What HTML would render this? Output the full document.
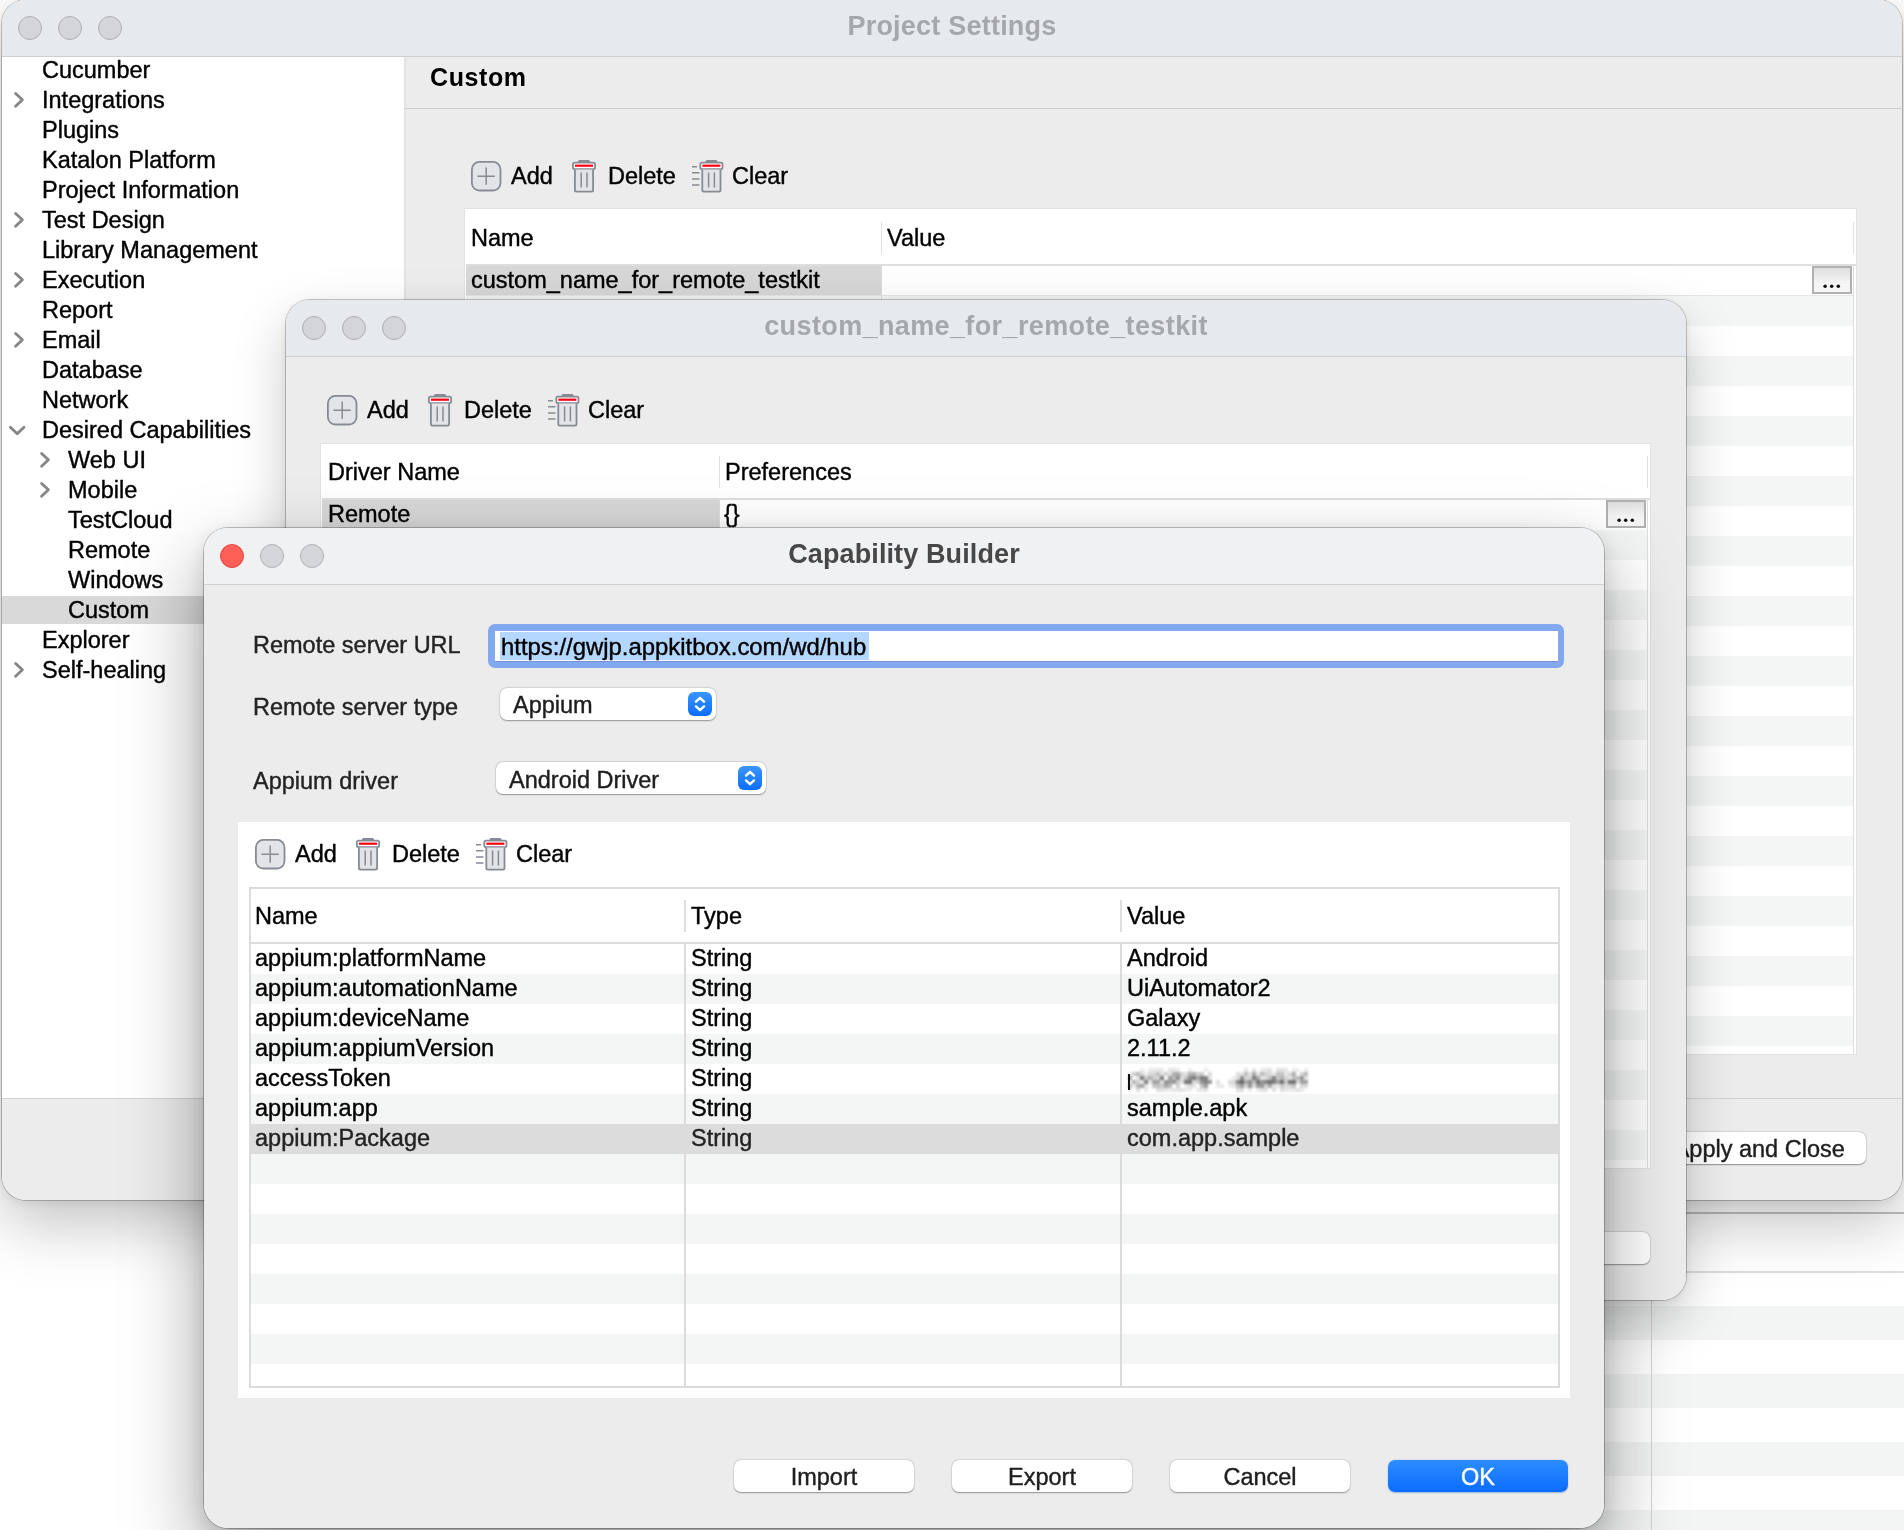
<!DOCTYPE html><html><head><meta charset="utf-8"><style>
html,body{margin:0;padding:0;width:1904px;height:1530px;overflow:hidden;background:#fff}
body{position:relative;font-family:"Liberation Sans",sans-serif}
.a{position:absolute}
.t{position:absolute;white-space:nowrap;will-change:transform;-webkit-text-stroke:0.4px currentColor}
.tb{-webkit-text-stroke:0}
.win{position:absolute;overflow:hidden;border-radius:24px;background:#ececec}
</style></head><body>
<div class="a" style="left:1560px;top:1211.5px;width:344px;height:2px;background:#c2c2c2"></div>
<div class="a" style="left:1560px;top:1271px;width:344px;height:1.5px;background:#dedede"></div>
<div class="a" style="left:1560px;top:1306px;width:344px;height:34px;background:#f3f4f4"></div>
<div class="a" style="left:1560px;top:1374px;width:344px;height:34px;background:#f3f4f4"></div>
<div class="a" style="left:1560px;top:1442px;width:344px;height:34px;background:#f3f4f4"></div>
<div class="a" style="left:1560px;top:1510px;width:344px;height:20px;background:#f3f4f4"></div>
<div class="a" style="left:1650.5px;top:1272px;width:1.2px;height:258px;background:#d4d4d4"></div>
<div class="a" style="left:2px;top:0px;width:1900px;height:1200px;border-radius:24px;box-shadow:0 0 0 1px rgba(0,0,0,0.22),0 3px 10px rgba(0,0,0,0.06),0 22px 64px rgba(0,0,0,0.25)"></div>
<div class="a" style="left:2px;top:0;width:1900px;height:1200px;border-radius:24px;overflow:hidden;background:#ececec">
<div class="a" style="left:-2px;top:0;width:1904px;height:1200px">
<div class="a" style="left:0px;top:0px;width:1904px;height:56px;background:#e7eaec"></div>
<div class="a" style="left:0px;top:56px;width:1904px;height:1px;background:#cdcfd1"></div>
<div class="a" style="left:18px;top:16px;width:22px;height:22px;border-radius:50%;background:#d3d5d8;border:1px solid #adb0b3;"></div>
<div class="a" style="left:58px;top:16px;width:22px;height:22px;border-radius:50%;background:#d3d5d8;border:1px solid #adb0b3;"></div>
<div class="a" style="left:98px;top:16px;width:22px;height:22px;border-radius:50%;background:#d3d5d8;border:1px solid #adb0b3;"></div>
<div class="t tb" style="left:452.0px;width:1000px;text-align:center;top:13.34px;font-size:27px;line-height:27px;color:#a5a8ab;font-weight:bold;letter-spacing:0.22px">Project Settings</div>
<div class="a" style="left:2px;top:57px;width:402px;height:1041px;background:#fff"></div>
<div class="a" style="left:404px;top:57px;width:1.5px;height:1041px;background:#e3e3e3"></div>
<div class="a" style="left:0px;top:1098px;width:1904px;height:1px;background:#d2d2d2"></div>
<div class="t" style="left:42px;top:59.41px;font-size:23.5px;line-height:23.5px;color:#000;font-weight:normal;letter-spacing:0px;">Cucumber</div>
<svg class="a" style="left:13px;top:91px" width="14" height="18" viewBox="0 0 14 18"><path d="M2.6 2.4L9.4 8.8L2.6 15.2" fill="none" stroke="#858585" stroke-width="2.8" stroke-linecap="round" stroke-linejoin="round"/></svg>
<div class="t" style="left:42px;top:89.41px;font-size:23.5px;line-height:23.5px;color:#000;font-weight:normal;letter-spacing:0px;">Integrations</div>
<div class="t" style="left:42px;top:119.41px;font-size:23.5px;line-height:23.5px;color:#000;font-weight:normal;letter-spacing:0px;">Plugins</div>
<div class="t" style="left:42px;top:149.41px;font-size:23.5px;line-height:23.5px;color:#000;font-weight:normal;letter-spacing:0px;">Katalon Platform</div>
<div class="t" style="left:42px;top:179.41px;font-size:23.5px;line-height:23.5px;color:#000;font-weight:normal;letter-spacing:0px;">Project Information</div>
<svg class="a" style="left:13px;top:211px" width="14" height="18" viewBox="0 0 14 18"><path d="M2.6 2.4L9.4 8.8L2.6 15.2" fill="none" stroke="#858585" stroke-width="2.8" stroke-linecap="round" stroke-linejoin="round"/></svg>
<div class="t" style="left:42px;top:209.41px;font-size:23.5px;line-height:23.5px;color:#000;font-weight:normal;letter-spacing:0px;">Test Design</div>
<div class="t" style="left:42px;top:239.41px;font-size:23.5px;line-height:23.5px;color:#000;font-weight:normal;letter-spacing:0px;">Library Management</div>
<svg class="a" style="left:13px;top:271px" width="14" height="18" viewBox="0 0 14 18"><path d="M2.6 2.4L9.4 8.8L2.6 15.2" fill="none" stroke="#858585" stroke-width="2.8" stroke-linecap="round" stroke-linejoin="round"/></svg>
<div class="t" style="left:42px;top:269.41px;font-size:23.5px;line-height:23.5px;color:#000;font-weight:normal;letter-spacing:0px;">Execution</div>
<div class="t" style="left:42px;top:299.41px;font-size:23.5px;line-height:23.5px;color:#000;font-weight:normal;letter-spacing:0px;">Report</div>
<svg class="a" style="left:13px;top:331px" width="14" height="18" viewBox="0 0 14 18"><path d="M2.6 2.4L9.4 8.8L2.6 15.2" fill="none" stroke="#858585" stroke-width="2.8" stroke-linecap="round" stroke-linejoin="round"/></svg>
<div class="t" style="left:42px;top:329.41px;font-size:23.5px;line-height:23.5px;color:#000;font-weight:normal;letter-spacing:0px;">Email</div>
<div class="t" style="left:42px;top:359.41px;font-size:23.5px;line-height:23.5px;color:#000;font-weight:normal;letter-spacing:0px;">Database</div>
<div class="t" style="left:42px;top:389.41px;font-size:23.5px;line-height:23.5px;color:#000;font-weight:normal;letter-spacing:0px;">Network</div>
<svg class="a" style="left:8px;top:424.8px" width="18" height="14" viewBox="0 0 18 14"><path d="M2.4 2.2L9.2 8.8L16 2.2" fill="none" stroke="#858585" stroke-width="2.8" stroke-linecap="round" stroke-linejoin="round"/></svg>
<div class="t" style="left:42px;top:419.41px;font-size:23.5px;line-height:23.5px;color:#000;font-weight:normal;letter-spacing:0px;">Desired Capabilities</div>
<svg class="a" style="left:39px;top:451px" width="14" height="18" viewBox="0 0 14 18"><path d="M2.6 2.4L9.4 8.8L2.6 15.2" fill="none" stroke="#858585" stroke-width="2.8" stroke-linecap="round" stroke-linejoin="round"/></svg>
<div class="t" style="left:68px;top:449.41px;font-size:23.5px;line-height:23.5px;color:#000;font-weight:normal;letter-spacing:0px;">Web UI</div>
<svg class="a" style="left:39px;top:481px" width="14" height="18" viewBox="0 0 14 18"><path d="M2.6 2.4L9.4 8.8L2.6 15.2" fill="none" stroke="#858585" stroke-width="2.8" stroke-linecap="round" stroke-linejoin="round"/></svg>
<div class="t" style="left:68px;top:479.41px;font-size:23.5px;line-height:23.5px;color:#000;font-weight:normal;letter-spacing:0px;">Mobile</div>
<div class="t" style="left:68px;top:509.41px;font-size:23.5px;line-height:23.5px;color:#000;font-weight:normal;letter-spacing:0px;">TestCloud</div>
<div class="t" style="left:68px;top:539.41px;font-size:23.5px;line-height:23.5px;color:#000;font-weight:normal;letter-spacing:0px;">Remote</div>
<div class="t" style="left:68px;top:569.41px;font-size:23.5px;line-height:23.5px;color:#000;font-weight:normal;letter-spacing:0px;">Windows</div>
<div class="a" style="left:2px;top:596px;width:402px;height:28px;background:#d9d9d9"></div>
<div class="t" style="left:68px;top:599.41px;font-size:23.5px;line-height:23.5px;color:#000;font-weight:normal;letter-spacing:0px;">Custom</div>
<div class="t" style="left:42px;top:629.41px;font-size:23.5px;line-height:23.5px;color:#000;font-weight:normal;letter-spacing:0px;">Explorer</div>
<svg class="a" style="left:13px;top:661px" width="14" height="18" viewBox="0 0 14 18"><path d="M2.6 2.4L9.4 8.8L2.6 15.2" fill="none" stroke="#858585" stroke-width="2.8" stroke-linecap="round" stroke-linejoin="round"/></svg>
<div class="t" style="left:42px;top:659.41px;font-size:23.5px;line-height:23.5px;color:#000;font-weight:normal;letter-spacing:0px;">Self-healing</div>
<div class="t tb" style="left:429.5px;top:65.34px;font-size:25px;line-height:25px;color:#000;font-weight:bold;letter-spacing:0.6px;">Custom</div>
<div class="a" style="left:404px;top:108px;width:1500px;height:1.2px;background:#cfcfcf"></div>
<svg class="a" style="left:471px;top:161px" width="32" height="32" viewBox="0 0 32 32"><rect x="0.9" y="0.9" width="28.6" height="28.6" rx="7.5" fill="#e3e4e7" stroke="#868b93" stroke-width="1.8"/><path d="M6.5 15.2H23.8M15.2 6.5V23.8" stroke="#868b93" stroke-width="1.5"/></svg>
<div class="t" style="left:511px;top:165.41px;font-size:23.5px;line-height:23.5px;color:#000;font-weight:normal;letter-spacing:0px;">Add</div>
<svg class="a" style="left:572px;top:160px" width="26" height="34" viewBox="0 0 26 34"><rect x="6" y="0" width="12" height="4" rx="1.5" fill="#868b93"/><rect x="0.9" y="2.6" width="22.2" height="6.6" rx="1.6" fill="#fff" stroke="#868b93" stroke-width="1.8"/><rect x="3" y="4.6" width="18" height="2.2" fill="#ff0010"/><path d="M2.9 9.4V30Q2.9 31.6 4.5 31.6H19.5Q21.1 31.6 21.1 30V9.4" fill="#e3e4e7" stroke="#868b93" stroke-width="1.8"/><path d="M9.2 12.4V27.6M15 12.4V27.6" stroke="#868b93" stroke-width="1.5"/></svg>
<div class="t" style="left:608px;top:165.41px;font-size:23.5px;line-height:23.5px;color:#000;font-weight:normal;letter-spacing:0px;">Delete</div>
<svg class="a" style="left:691px;top:160px" width="34" height="34" viewBox="0 0 34 34"><path d="M1 6.8H6M1 12.8H8.5M1 19H8.5M1 25H8.5" stroke="#868b93" stroke-width="1.4"/><rect x="14.5" y="0" width="12" height="4" rx="1.5" fill="#868b93"/><rect x="9.3" y="2.6" width="22.2" height="6.6" rx="1.6" fill="#fff" stroke="#868b93" stroke-width="1.8"/><rect x="11.4" y="4.6" width="18" height="2.2" fill="#ff0010"/><path d="M11.3 9.4V30Q11.3 31.6 12.9 31.6H27.9Q29.5 31.6 29.5 30V9.4" fill="#e3e4e7" stroke="#868b93" stroke-width="1.8"/><path d="M17.6 12.4V27.6M23.4 12.4V27.6" stroke="#868b93" stroke-width="1.5"/></svg>
<div class="t" style="left:732px;top:165.41px;font-size:23.5px;line-height:23.5px;color:#000;font-weight:normal;letter-spacing:0px;">Clear</div>
<div class="a" style="left:465px;top:209px;width:1391px;height:845px;background:#fff;box-shadow:0 0 0 1px #e2e2e2"></div>
<div class="a" style="left:466px;top:264px;width:1390px;height:2px;background:#dedede"></div>
<div class="a" style="left:466px;top:296px;width:1387px;height:30px;background:#f4f5f5"></div>
<div class="a" style="left:466px;top:356px;width:1387px;height:30px;background:#f4f5f5"></div>
<div class="a" style="left:466px;top:416px;width:1387px;height:30px;background:#f4f5f5"></div>
<div class="a" style="left:466px;top:476px;width:1387px;height:30px;background:#f4f5f5"></div>
<div class="a" style="left:466px;top:536px;width:1387px;height:30px;background:#f4f5f5"></div>
<div class="a" style="left:466px;top:596px;width:1387px;height:30px;background:#f4f5f5"></div>
<div class="a" style="left:466px;top:656px;width:1387px;height:30px;background:#f4f5f5"></div>
<div class="a" style="left:466px;top:716px;width:1387px;height:30px;background:#f4f5f5"></div>
<div class="a" style="left:466px;top:776px;width:1387px;height:30px;background:#f4f5f5"></div>
<div class="a" style="left:466px;top:836px;width:1387px;height:30px;background:#f4f5f5"></div>
<div class="a" style="left:466px;top:896px;width:1387px;height:30px;background:#f4f5f5"></div>
<div class="a" style="left:466px;top:956px;width:1387px;height:30px;background:#f4f5f5"></div>
<div class="a" style="left:466px;top:1016px;width:1387px;height:30px;background:#f4f5f5"></div>
<div class="a" style="left:466px;top:266px;width:415px;height:29.5px;background:#d7d7d7"></div>
<div class="a" style="left:880.5px;top:222px;width:1.5px;height:32px;background:#e0e0e0"></div>
<div class="a" style="left:880.5px;top:266px;width:1.5px;height:788px;background:#dcdcdc"></div>
<div class="a" style="left:1852.5px;top:222px;width:1.5px;height:32px;background:#e0e0e0"></div>
<div class="a" style="left:1852.5px;top:266px;width:1.8px;height:788px;background:#dedede"></div>
<div class="a" style="left:466px;top:295px;width:1387px;height:1px;background:#e6e6e6"></div>
<div class="t" style="left:471px;top:227.21px;font-size:23.5px;line-height:23.5px;color:#000;font-weight:normal;letter-spacing:0px;">Name</div>
<div class="t" style="left:886.5px;top:227.21px;font-size:23.5px;line-height:23.5px;color:#000;font-weight:normal;letter-spacing:0px;">Value</div>
<div class="t" style="left:471px;top:269.41px;font-size:23.5px;line-height:23.5px;color:#000;font-weight:normal;letter-spacing:0px;">custom_name_for_remote_testkit</div>
<div class="a" style="left:1812px;top:266px;width:36px;height:24px;border:2px solid #b1b1b1;background:linear-gradient(#dedede,#f4f4f4 60%,#f6f6f6)"></div>
<svg class="a" style="left:1812px;top:266px" width="40" height="28" viewBox="1812 266 40 28"><circle cx="1825.10" cy="286.20" r="1.75" fill="#111"/><circle cx="1831.70" cy="286.20" r="1.75" fill="#111"/><circle cx="1838.30" cy="286.20" r="1.75" fill="#111"/></svg>
<div class="a" style="left:1651.5px;top:1132px;width:214.5px;height:32px;border-radius:7px;background:#fff;box-shadow:0 0.5px 1.5px rgba(0,0,0,0.38),0 0 0 0.5px rgba(0,0,0,0.06)"></div>
<div class="t" style="left:1651.5px;width:214.5px;text-align:center;top:1137.61px;font-size:23.5px;line-height:23.5px;color:#1e1e1e;font-weight:normal;letter-spacing:0px">Apply and Close</div>
</div></div>
<div class="a" style="left:286px;top:300px;width:1400px;height:1000px;border-radius:24px;box-shadow:0 0 0 1px rgba(0,0,0,0.22),0 2px 10px rgba(0,0,0,0.08),0 20px 52px rgba(0,0,0,0.21)"></div>
<div class="a" style="left:286px;top:300px;width:1400px;height:1000px;border-radius:24px;overflow:hidden;background:#ececec">
<div class="a" style="left:-286px;top:-300px;width:1904px;height:1530px">
<div class="a" style="left:286px;top:300px;width:1400px;height:56px;background:#e7eaec"></div>
<div class="a" style="left:286px;top:356px;width:1400px;height:1px;background:#cdcfd1"></div>
<div class="a" style="left:302px;top:316px;width:22px;height:22px;border-radius:50%;background:#d3d5d8;border:1px solid #adb0b3;"></div>
<div class="a" style="left:342px;top:316px;width:22px;height:22px;border-radius:50%;background:#d3d5d8;border:1px solid #adb0b3;"></div>
<div class="a" style="left:382px;top:316px;width:22px;height:22px;border-radius:50%;background:#d3d5d8;border:1px solid #adb0b3;"></div>
<div class="t tb" style="left:485.5px;width:1000px;text-align:center;top:313.44px;font-size:27px;line-height:27px;color:#a5a8ab;font-weight:bold;letter-spacing:0.38px">custom_name_for_remote_testkit</div>
<svg class="a" style="left:327px;top:395px" width="32" height="32" viewBox="0 0 32 32"><rect x="0.9" y="0.9" width="28.6" height="28.6" rx="7.5" fill="#e3e4e7" stroke="#868b93" stroke-width="1.8"/><path d="M6.5 15.2H23.8M15.2 6.5V23.8" stroke="#868b93" stroke-width="1.5"/></svg>
<div class="t" style="left:367px;top:399.41px;font-size:23.5px;line-height:23.5px;color:#000;font-weight:normal;letter-spacing:0px;">Add</div>
<svg class="a" style="left:428px;top:394px" width="26" height="34" viewBox="0 0 26 34"><rect x="6" y="0" width="12" height="4" rx="1.5" fill="#868b93"/><rect x="0.9" y="2.6" width="22.2" height="6.6" rx="1.6" fill="#fff" stroke="#868b93" stroke-width="1.8"/><rect x="3" y="4.6" width="18" height="2.2" fill="#ff0010"/><path d="M2.9 9.4V30Q2.9 31.6 4.5 31.6H19.5Q21.1 31.6 21.1 30V9.4" fill="#e3e4e7" stroke="#868b93" stroke-width="1.8"/><path d="M9.2 12.4V27.6M15 12.4V27.6" stroke="#868b93" stroke-width="1.5"/></svg>
<div class="t" style="left:464px;top:399.41px;font-size:23.5px;line-height:23.5px;color:#000;font-weight:normal;letter-spacing:0px;">Delete</div>
<svg class="a" style="left:547px;top:394px" width="34" height="34" viewBox="0 0 34 34"><path d="M1 6.8H6M1 12.8H8.5M1 19H8.5M1 25H8.5" stroke="#868b93" stroke-width="1.4"/><rect x="14.5" y="0" width="12" height="4" rx="1.5" fill="#868b93"/><rect x="9.3" y="2.6" width="22.2" height="6.6" rx="1.6" fill="#fff" stroke="#868b93" stroke-width="1.8"/><rect x="11.4" y="4.6" width="18" height="2.2" fill="#ff0010"/><path d="M11.3 9.4V30Q11.3 31.6 12.9 31.6H27.9Q29.5 31.6 29.5 30V9.4" fill="#e3e4e7" stroke="#868b93" stroke-width="1.8"/><path d="M17.6 12.4V27.6M23.4 12.4V27.6" stroke="#868b93" stroke-width="1.5"/></svg>
<div class="t" style="left:588px;top:399.41px;font-size:23.5px;line-height:23.5px;color:#000;font-weight:normal;letter-spacing:0px;">Clear</div>
<div class="a" style="left:321px;top:443.5px;width:1329px;height:724.5px;background:#fff;box-shadow:0 0 0 1px #e2e2e2"></div>
<div class="a" style="left:322px;top:498px;width:1328px;height:2px;background:#dedede"></div>
<div class="a" style="left:322px;top:530px;width:1325px;height:30px;background:#f4f5f5"></div>
<div class="a" style="left:322px;top:590px;width:1325px;height:30px;background:#f4f5f5"></div>
<div class="a" style="left:322px;top:650px;width:1325px;height:30px;background:#f4f5f5"></div>
<div class="a" style="left:322px;top:710px;width:1325px;height:30px;background:#f4f5f5"></div>
<div class="a" style="left:322px;top:770px;width:1325px;height:30px;background:#f4f5f5"></div>
<div class="a" style="left:322px;top:830px;width:1325px;height:30px;background:#f4f5f5"></div>
<div class="a" style="left:322px;top:890px;width:1325px;height:30px;background:#f4f5f5"></div>
<div class="a" style="left:322px;top:950px;width:1325px;height:30px;background:#f4f5f5"></div>
<div class="a" style="left:322px;top:1010px;width:1325px;height:30px;background:#f4f5f5"></div>
<div class="a" style="left:322px;top:1070px;width:1325px;height:30px;background:#f4f5f5"></div>
<div class="a" style="left:322px;top:1130px;width:1325px;height:30px;background:#f4f5f5"></div>
<div class="a" style="left:322px;top:500px;width:397px;height:28px;background:#d7d7d7"></div>
<div class="a" style="left:718.5px;top:456px;width:1.5px;height:32px;background:#e0e0e0"></div>
<div class="a" style="left:718.5px;top:500px;width:1.5px;height:668px;background:#dcdcdc"></div>
<div class="a" style="left:1646.5px;top:456px;width:1.5px;height:32px;background:#e0e0e0"></div>
<div class="a" style="left:1646.5px;top:500px;width:1.8px;height:668px;background:#dedede"></div>
<div class="t" style="left:327.5px;top:461.01px;font-size:23.5px;line-height:23.5px;color:#000;font-weight:normal;letter-spacing:0px;">Driver Name</div>
<div class="t" style="left:725px;top:461.01px;font-size:23.5px;line-height:23.5px;color:#000;font-weight:normal;letter-spacing:0px;">Preferences</div>
<div class="t" style="left:327.5px;top:503.11px;font-size:23.5px;line-height:23.5px;color:#000;font-weight:normal;letter-spacing:0px;">Remote</div>
<div class="t" style="left:724px;top:503.11px;font-size:23.5px;line-height:23.5px;color:#000;font-weight:normal;letter-spacing:0px;">{}</div>
<div class="a" style="left:1606px;top:500px;width:36px;height:24px;border:2px solid #b1b1b1;background:linear-gradient(#dedede,#f4f4f4 60%,#f6f6f6)"></div>
<svg class="a" style="left:1606px;top:500px" width="40" height="28" viewBox="1606 500 40 28"><circle cx="1619.10" cy="520.20" r="1.75" fill="#111"/><circle cx="1625.70" cy="520.20" r="1.75" fill="#111"/><circle cx="1632.30" cy="520.20" r="1.75" fill="#111"/></svg>
<div class="a" style="left:1470px;top:1232px;width:180px;height:32px;border-radius:7px;background:#fff;box-shadow:0 0.5px 1.5px rgba(0,0,0,0.38),0 0 0 0.5px rgba(0,0,0,0.06)"></div>
<div class="t" style="left:1470.0px;width:180px;text-align:center;top:1237.61px;font-size:23.5px;line-height:23.5px;color:#1e1e1e;font-weight:normal;letter-spacing:0px">OK</div>
</div></div>
<div class="a" style="left:204px;top:528px;width:1400px;height:1000px;border-radius:24px;box-shadow:0 0 0 1px rgba(0,0,0,0.24),0 6px 22px rgba(0,0,0,0.12),0 36px 80px rgba(0,0,0,0.38)"></div>
<div class="a" style="left:204px;top:528px;width:1400px;height:1000px;border-radius:24px;overflow:hidden;background:#ececec">
<div class="a" style="left:-204px;top:-528px;width:1904px;height:1530px">
<div class="a" style="left:204px;top:528px;width:1400px;height:56px;background:#f0f1f3"></div>
<div class="a" style="left:204px;top:584px;width:1400px;height:1px;background:#cfd0d2"></div>
<div class="a" style="left:220px;top:544px;width:22px;height:22px;border-radius:50%;background:#fe5f57;border:1px solid #e2463f;"></div>
<div class="a" style="left:260px;top:544px;width:22px;height:22px;border-radius:50%;background:#d3d5d8;border:1px solid #adb0b3;"></div>
<div class="a" style="left:300px;top:544px;width:22px;height:22px;border-radius:50%;background:#d3d5d8;border:1px solid #adb0b3;"></div>
<div class="t tb" style="left:403.5px;width:1000px;text-align:center;top:540.84px;font-size:27px;line-height:27px;color:#474747;font-weight:bold;letter-spacing:0.12px">Capability Builder</div>
<div class="t" style="left:252.5px;top:633.81px;font-size:23.5px;line-height:23.5px;color:#232323;font-weight:normal;letter-spacing:0px;">Remote server URL</div>
<div class="t" style="left:252.5px;top:696.41px;font-size:23.5px;line-height:23.5px;color:#232323;font-weight:normal;letter-spacing:0px;">Remote server type</div>
<div class="t" style="left:252.5px;top:769.81px;font-size:23.5px;line-height:23.5px;color:#232323;font-weight:normal;letter-spacing:0px;">Appium driver</div>
<div class="a" style="left:488px;top:624px;width:1076px;height:44px;border-radius:7px;background:#82a9ef"></div>
<div class="a" style="left:494.5px;top:630.5px;width:1063px;height:31px;background:#fff;box-shadow:inset 0 -1px 0 #6f93d6"></div>
<div class="a" style="left:500px;top:632px;width:369px;height:28px;background:#b3d7ff"></div>
<div class="t" style="left:501px;top:634.57px;font-size:23.9px;line-height:23.9px;color:#000;font-weight:normal;letter-spacing:0px;">https://gwjp.appkitbox.com/wd/hub</div>
<div class="a" style="left:500px;top:688px;width:216px;height:32px;border-radius:7px;background:#fff;box-shadow:0 0.5px 1.5px rgba(0,0,0,0.35),0 0 0 0.5px rgba(0,0,0,0.08)"></div>
<div class="t" style="left:513px;top:694.41px;font-size:23.5px;line-height:23.5px;color:#1d1d1d;font-weight:normal;letter-spacing:0px;">Appium</div>
<svg class="a" style="left:688px;top:692px" width="24" height="24" viewBox="0 0 24 24"><defs><linearGradient id="sg" x1="0" y1="0" x2="0" y2="1"><stop offset="0" stop-color="#3b95ff"/><stop offset="1" stop-color="#0b6dff"/></linearGradient></defs><rect x="0" y="0" width="24" height="24" rx="6" fill="url(#sg)"/><path d="M8 9.6L12 5.8L16 9.6M8 14.4L12 18.2L16 14.4" fill="none" stroke="#fff" stroke-width="2.4" stroke-linecap="round" stroke-linejoin="round"/></svg>
<div class="a" style="left:496px;top:762px;width:270px;height:32px;border-radius:7px;background:#fff;box-shadow:0 0.5px 1.5px rgba(0,0,0,0.35),0 0 0 0.5px rgba(0,0,0,0.08)"></div>
<div class="t" style="left:509px;top:768.71px;font-size:23.5px;line-height:23.5px;color:#1d1d1d;font-weight:normal;letter-spacing:0px;">Android Driver</div>
<svg class="a" style="left:738px;top:766px" width="24" height="24" viewBox="0 0 24 24"><defs><linearGradient id="sg" x1="0" y1="0" x2="0" y2="1"><stop offset="0" stop-color="#3b95ff"/><stop offset="1" stop-color="#0b6dff"/></linearGradient></defs><rect x="0" y="0" width="24" height="24" rx="6" fill="url(#sg)"/><path d="M8 9.6L12 5.8L16 9.6M8 14.4L12 18.2L16 14.4" fill="none" stroke="#fff" stroke-width="2.4" stroke-linecap="round" stroke-linejoin="round"/></svg>
<div class="a" style="left:238px;top:822px;width:1332px;height:576px;background:#fff"></div>
<svg class="a" style="left:255px;top:839px" width="32" height="32" viewBox="0 0 32 32"><rect x="0.9" y="0.9" width="28.6" height="28.6" rx="7.5" fill="#e3e4e7" stroke="#868b93" stroke-width="1.8"/><path d="M6.5 15.2H23.8M15.2 6.5V23.8" stroke="#868b93" stroke-width="1.5"/></svg>
<div class="t" style="left:295px;top:843.41px;font-size:23.5px;line-height:23.5px;color:#000;font-weight:normal;letter-spacing:0px;">Add</div>
<svg class="a" style="left:356px;top:838px" width="26" height="34" viewBox="0 0 26 34"><rect x="6" y="0" width="12" height="4" rx="1.5" fill="#868b93"/><rect x="0.9" y="2.6" width="22.2" height="6.6" rx="1.6" fill="#fff" stroke="#868b93" stroke-width="1.8"/><rect x="3" y="4.6" width="18" height="2.2" fill="#ff0010"/><path d="M2.9 9.4V30Q2.9 31.6 4.5 31.6H19.5Q21.1 31.6 21.1 30V9.4" fill="#e3e4e7" stroke="#868b93" stroke-width="1.8"/><path d="M9.2 12.4V27.6M15 12.4V27.6" stroke="#868b93" stroke-width="1.5"/></svg>
<div class="t" style="left:392px;top:843.41px;font-size:23.5px;line-height:23.5px;color:#000;font-weight:normal;letter-spacing:0px;">Delete</div>
<svg class="a" style="left:475px;top:838px" width="34" height="34" viewBox="0 0 34 34"><path d="M1 6.8H6M1 12.8H8.5M1 19H8.5M1 25H8.5" stroke="#868b93" stroke-width="1.4"/><rect x="14.5" y="0" width="12" height="4" rx="1.5" fill="#868b93"/><rect x="9.3" y="2.6" width="22.2" height="6.6" rx="1.6" fill="#fff" stroke="#868b93" stroke-width="1.8"/><rect x="11.4" y="4.6" width="18" height="2.2" fill="#ff0010"/><path d="M11.3 9.4V30Q11.3 31.6 12.9 31.6H27.9Q29.5 31.6 29.5 30V9.4" fill="#e3e4e7" stroke="#868b93" stroke-width="1.8"/><path d="M17.6 12.4V27.6M23.4 12.4V27.6" stroke="#868b93" stroke-width="1.5"/></svg>
<div class="t" style="left:516px;top:843.41px;font-size:23.5px;line-height:23.5px;color:#000;font-weight:normal;letter-spacing:0px;">Clear</div>
<div class="a" style="left:248.5px;top:886.5px;width:1311px;height:501.5px;background:#fff;box-shadow:inset 0 0 0 2px #dcdcdc"></div>
<div class="a" style="left:250.5px;top:974px;width:1307px;height:30px;background:#f4f5f5"></div>
<div class="a" style="left:250.5px;top:1034px;width:1307px;height:30px;background:#f4f5f5"></div>
<div class="a" style="left:250.5px;top:1094px;width:1307px;height:30px;background:#f4f5f5"></div>
<div class="a" style="left:250.5px;top:1154px;width:1307px;height:30px;background:#f4f5f5"></div>
<div class="a" style="left:250.5px;top:1214px;width:1307px;height:30px;background:#f4f5f5"></div>
<div class="a" style="left:250.5px;top:1274px;width:1307px;height:30px;background:#f4f5f5"></div>
<div class="a" style="left:250.5px;top:1334px;width:1307px;height:30px;background:#f4f5f5"></div>
<div class="a" style="left:250.5px;top:1124px;width:1307px;height:30px;background:#dcdcdc"></div>
<div class="a" style="left:250.5px;top:941.5px;width:1307px;height:2px;background:#dcdcdc"></div>
<div class="a" style="left:684.2px;top:900px;width:1.6px;height:32px;background:#e0e0e0"></div>
<div class="a" style="left:1120.2px;top:900px;width:1.6px;height:32px;background:#e0e0e0"></div>
<div class="a" style="left:684.2px;top:943.5px;width:1.6px;height:443px;background:#dcdcdc"></div>
<div class="a" style="left:1120.2px;top:943.5px;width:1.6px;height:443px;background:#dcdcdc"></div>
<div class="t" style="left:255px;top:904.91px;font-size:23.5px;line-height:23.5px;color:#000;font-weight:normal;letter-spacing:0px;">Name</div>
<div class="t" style="left:691px;top:904.91px;font-size:23.5px;line-height:23.5px;color:#000;font-weight:normal;letter-spacing:0px;">Type</div>
<div class="t" style="left:1126.5px;top:904.91px;font-size:23.5px;line-height:23.5px;color:#000;font-weight:normal;letter-spacing:0px;">Value</div>
<div class="t" style="left:255px;top:946.91px;font-size:23.5px;line-height:23.5px;color:#000;font-weight:normal;letter-spacing:0px;">appium:platformName</div>
<div class="t" style="left:691px;top:946.91px;font-size:23.5px;line-height:23.5px;color:#000;font-weight:normal;letter-spacing:0px;">String</div>
<div class="t" style="left:1126.5px;top:946.91px;font-size:23.5px;line-height:23.5px;color:#000;font-weight:normal;letter-spacing:0px;">Android</div>
<div class="t" style="left:255px;top:976.91px;font-size:23.5px;line-height:23.5px;color:#000;font-weight:normal;letter-spacing:0px;">appium:automationName</div>
<div class="t" style="left:691px;top:976.91px;font-size:23.5px;line-height:23.5px;color:#000;font-weight:normal;letter-spacing:0px;">String</div>
<div class="t" style="left:1126.5px;top:976.91px;font-size:23.5px;line-height:23.5px;color:#000;font-weight:normal;letter-spacing:0px;">UiAutomator2</div>
<div class="t" style="left:255px;top:1006.91px;font-size:23.5px;line-height:23.5px;color:#000;font-weight:normal;letter-spacing:0px;">appium:deviceName</div>
<div class="t" style="left:691px;top:1006.91px;font-size:23.5px;line-height:23.5px;color:#000;font-weight:normal;letter-spacing:0px;">String</div>
<div class="t" style="left:1126.5px;top:1006.91px;font-size:23.5px;line-height:23.5px;color:#000;font-weight:normal;letter-spacing:0px;">Galaxy</div>
<div class="t" style="left:255px;top:1036.91px;font-size:23.5px;line-height:23.5px;color:#000;font-weight:normal;letter-spacing:0px;">appium:appiumVersion</div>
<div class="t" style="left:691px;top:1036.91px;font-size:23.5px;line-height:23.5px;color:#000;font-weight:normal;letter-spacing:0px;">String</div>
<div class="t" style="left:1126.5px;top:1036.91px;font-size:23.5px;line-height:23.5px;color:#000;font-weight:normal;letter-spacing:0px;">2.11.2</div>
<div class="t" style="left:255px;top:1066.91px;font-size:23.5px;line-height:23.5px;color:#000;font-weight:normal;letter-spacing:0px;">accessToken</div>
<div class="t" style="left:691px;top:1066.91px;font-size:23.5px;line-height:23.5px;color:#000;font-weight:normal;letter-spacing:0px;">String</div>
<div class="a" style="left:1122px;top:1064.5px;width:200px;height:29px;background:#fff"></div>
<svg class="a" style="left:0;top:0;filter:blur(0.9px)" width="1904" height="1530"><rect x="1128" y="1072" width="4" height="4" fill="rgb(236,236,236)"/><rect x="1128" y="1076" width="4" height="4" fill="rgb(162,162,162)"/><rect x="1128" y="1080" width="4" height="4" fill="rgb(233,233,233)"/><rect x="1128" y="1084" width="4" height="4" fill="rgb(191,191,191)"/><rect x="1128" y="1088" width="4" height="4" fill="rgb(239,239,239)"/><rect x="1132" y="1072" width="4" height="4" fill="rgb(207,207,207)"/><rect x="1132" y="1080" width="4" height="4" fill="rgb(181,181,181)"/><rect x="1132" y="1084" width="4" height="4" fill="rgb(239,239,239)"/><rect x="1136" y="1072" width="4" height="4" fill="rgb(182,182,182)"/><rect x="1136" y="1076" width="4" height="4" fill="rgb(229,229,229)"/><rect x="1136" y="1080" width="4" height="4" fill="rgb(211,211,211)"/><rect x="1136" y="1084" width="4" height="4" fill="rgb(181,181,181)"/><rect x="1136" y="1088" width="4" height="4" fill="rgb(219,219,219)"/><rect x="1140" y="1068" width="4" height="4" fill="rgb(236,236,236)"/><rect x="1140" y="1072" width="4" height="4" fill="rgb(216,216,216)"/><rect x="1140" y="1076" width="4" height="4" fill="rgb(121,121,121)"/><rect x="1140" y="1080" width="4" height="4" fill="rgb(236,236,236)"/><rect x="1140" y="1084" width="4" height="4" fill="rgb(158,158,158)"/><rect x="1144" y="1072" width="4" height="4" fill="rgb(239,239,239)"/><rect x="1144" y="1076" width="4" height="4" fill="rgb(205,205,205)"/><rect x="1144" y="1080" width="4" height="4" fill="rgb(127,127,127)"/><rect x="1144" y="1084" width="4" height="4" fill="rgb(228,228,228)"/><rect x="1144" y="1088" width="4" height="4" fill="rgb(232,232,232)"/><rect x="1148" y="1068" width="4" height="4" fill="rgb(235,235,235)"/><rect x="1148" y="1072" width="4" height="4" fill="rgb(218,218,218)"/><rect x="1148" y="1076" width="4" height="4" fill="rgb(175,175,175)"/><rect x="1148" y="1080" width="4" height="4" fill="rgb(234,234,234)"/><rect x="1152" y="1068" width="4" height="4" fill="rgb(234,234,234)"/><rect x="1152" y="1072" width="4" height="4" fill="rgb(214,214,214)"/><rect x="1152" y="1076" width="4" height="4" fill="rgb(205,205,205)"/><rect x="1152" y="1080" width="4" height="4" fill="rgb(160,160,160)"/><rect x="1152" y="1084" width="4" height="4" fill="rgb(199,199,199)"/><rect x="1156" y="1068" width="4" height="4" fill="rgb(230,230,230)"/><rect x="1156" y="1072" width="4" height="4" fill="rgb(192,192,192)"/><rect x="1156" y="1076" width="4" height="4" fill="rgb(214,214,214)"/><rect x="1156" y="1080" width="4" height="4" fill="rgb(161,161,161)"/><rect x="1156" y="1084" width="4" height="4" fill="rgb(192,192,192)"/><rect x="1156" y="1088" width="4" height="4" fill="rgb(222,222,222)"/><rect x="1160" y="1068" width="4" height="4" fill="rgb(232,232,232)"/><rect x="1160" y="1072" width="4" height="4" fill="rgb(225,225,225)"/><rect x="1160" y="1076" width="4" height="4" fill="rgb(121,121,121)"/><rect x="1160" y="1080" width="4" height="4" fill="rgb(226,226,226)"/><rect x="1160" y="1084" width="4" height="4" fill="rgb(203,203,203)"/><rect x="1160" y="1088" width="4" height="4" fill="rgb(226,226,226)"/><rect x="1164" y="1072" width="4" height="4" fill="rgb(209,209,209)"/><rect x="1164" y="1080" width="4" height="4" fill="rgb(148,148,148)"/><rect x="1164" y="1084" width="4" height="4" fill="rgb(167,167,167)"/><rect x="1164" y="1088" width="4" height="4" fill="rgb(232,232,232)"/><rect x="1168" y="1068" width="4" height="4" fill="rgb(228,228,228)"/><rect x="1168" y="1072" width="4" height="4" fill="rgb(223,223,223)"/><rect x="1168" y="1076" width="4" height="4" fill="rgb(157,157,157)"/><rect x="1168" y="1080" width="4" height="4" fill="rgb(159,159,159)"/><rect x="1168" y="1084" width="4" height="4" fill="rgb(186,186,186)"/><rect x="1168" y="1088" width="4" height="4" fill="rgb(236,236,236)"/><rect x="1172" y="1068" width="4" height="4" fill="rgb(229,229,229)"/><rect x="1172" y="1072" width="4" height="4" fill="rgb(172,172,172)"/><rect x="1172" y="1076" width="4" height="4" fill="rgb(185,185,185)"/><rect x="1172" y="1080" width="4" height="4" fill="rgb(149,149,149)"/><rect x="1172" y="1088" width="4" height="4" fill="rgb(228,228,228)"/><rect x="1176" y="1068" width="4" height="4" fill="rgb(234,234,234)"/><rect x="1176" y="1072" width="4" height="4" fill="rgb(168,168,168)"/><rect x="1176" y="1076" width="4" height="4" fill="rgb(141,141,141)"/><rect x="1176" y="1080" width="4" height="4" fill="rgb(203,203,203)"/><rect x="1176" y="1084" width="4" height="4" fill="rgb(206,206,206)"/><rect x="1176" y="1088" width="4" height="4" fill="rgb(229,229,229)"/><rect x="1180" y="1072" width="4" height="4" fill="rgb(211,211,211)"/><rect x="1180" y="1076" width="4" height="4" fill="rgb(223,223,223)"/><rect x="1180" y="1080" width="4" height="4" fill="rgb(226,226,226)"/><rect x="1180" y="1088" width="4" height="4" fill="rgb(225,225,225)"/><rect x="1184" y="1072" width="4" height="4" fill="rgb(228,228,228)"/><rect x="1184" y="1076" width="4" height="4" fill="rgb(195,195,195)"/><rect x="1184" y="1080" width="4" height="4" fill="rgb(119,119,119)"/><rect x="1184" y="1084" width="4" height="4" fill="rgb(238,238,238)"/><rect x="1184" y="1088" width="4" height="4" fill="rgb(236,236,236)"/><rect x="1188" y="1068" width="4" height="4" fill="rgb(237,237,237)"/><rect x="1188" y="1072" width="4" height="4" fill="rgb(177,177,177)"/><rect x="1188" y="1076" width="4" height="4" fill="rgb(141,141,141)"/><rect x="1188" y="1080" width="4" height="4" fill="rgb(120,120,120)"/><rect x="1188" y="1084" width="4" height="4" fill="rgb(217,217,217)"/><rect x="1188" y="1088" width="4" height="4" fill="rgb(237,237,237)"/><rect x="1192" y="1072" width="4" height="4" fill="rgb(177,177,177)"/><rect x="1192" y="1076" width="4" height="4" fill="rgb(124,124,124)"/><rect x="1192" y="1080" width="4" height="4" fill="rgb(222,222,222)"/><rect x="1192" y="1084" width="4" height="4" fill="rgb(228,228,228)"/><rect x="1196" y="1072" width="4" height="4" fill="rgb(209,209,209)"/><rect x="1196" y="1076" width="4" height="4" fill="rgb(170,170,170)"/><rect x="1196" y="1080" width="4" height="4" fill="rgb(206,206,206)"/><rect x="1196" y="1088" width="4" height="4" fill="rgb(237,237,237)"/><rect x="1200" y="1072" width="4" height="4" fill="rgb(203,203,203)"/><rect x="1200" y="1076" width="4" height="4" fill="rgb(124,124,124)"/><rect x="1200" y="1080" width="4" height="4" fill="rgb(145,145,145)"/><rect x="1200" y="1084" width="4" height="4" fill="rgb(193,193,193)"/><rect x="1200" y="1088" width="4" height="4" fill="rgb(230,230,230)"/><rect x="1204" y="1068" width="4" height="4" fill="rgb(234,234,234)"/><rect x="1204" y="1076" width="4" height="4" fill="rgb(131,131,131)"/><rect x="1204" y="1080" width="4" height="4" fill="rgb(132,132,132)"/><rect x="1204" y="1084" width="4" height="4" fill="rgb(156,156,156)"/><rect x="1204" y="1088" width="4" height="4" fill="rgb(224,224,224)"/><rect x="1208" y="1072" width="4" height="4" fill="rgb(216,216,216)"/><rect x="1208" y="1076" width="4" height="4" fill="rgb(231,231,231)"/><rect x="1208" y="1080" width="4" height="4" fill="rgb(153,153,153)"/><rect x="1216" y="1080" width="4" height="4" fill="rgb(221,221,221)"/><rect x="1216" y="1084" width="4" height="4" fill="rgb(237,237,237)"/><rect x="1220" y="1084" width="4" height="4" fill="rgb(231,231,231)"/><rect x="1228" y="1080" width="4" height="4" fill="rgb(218,218,218)"/><rect x="1228" y="1084" width="4" height="4" fill="rgb(239,239,239)"/><rect x="1232" y="1076" width="4" height="4" fill="rgb(235,235,235)"/><rect x="1232" y="1080" width="4" height="4" fill="rgb(217,217,217)"/><rect x="1232" y="1084" width="4" height="4" fill="rgb(230,230,230)"/><rect x="1236" y="1072" width="4" height="4" fill="rgb(219,219,219)"/><rect x="1236" y="1076" width="4" height="4" fill="rgb(223,223,223)"/><rect x="1236" y="1080" width="4" height="4" fill="rgb(133,133,133)"/><rect x="1236" y="1084" width="4" height="4" fill="rgb(191,191,191)"/><rect x="1236" y="1088" width="4" height="4" fill="rgb(225,225,225)"/><rect x="1240" y="1072" width="4" height="4" fill="rgb(230,230,230)"/><rect x="1240" y="1076" width="4" height="4" fill="rgb(142,142,142)"/><rect x="1240" y="1080" width="4" height="4" fill="rgb(103,103,103)"/><rect x="1240" y="1084" width="4" height="4" fill="rgb(158,158,158)"/><rect x="1240" y="1088" width="4" height="4" fill="rgb(224,224,224)"/><rect x="1244" y="1068" width="4" height="4" fill="rgb(230,230,230)"/><rect x="1244" y="1072" width="4" height="4" fill="rgb(189,189,189)"/><rect x="1244" y="1076" width="4" height="4" fill="rgb(216,216,216)"/><rect x="1244" y="1080" width="4" height="4" fill="rgb(169,169,169)"/><rect x="1244" y="1084" width="4" height="4" fill="rgb(210,210,210)"/><rect x="1248" y="1072" width="4" height="4" fill="rgb(226,226,226)"/><rect x="1248" y="1076" width="4" height="4" fill="rgb(212,212,212)"/><rect x="1248" y="1080" width="4" height="4" fill="rgb(145,145,145)"/><rect x="1248" y="1084" width="4" height="4" fill="rgb(147,147,147)"/><rect x="1248" y="1088" width="4" height="4" fill="rgb(236,236,236)"/><rect x="1252" y="1068" width="4" height="4" fill="rgb(226,226,226)"/><rect x="1252" y="1072" width="4" height="4" fill="rgb(169,169,169)"/><rect x="1252" y="1076" width="4" height="4" fill="rgb(124,124,124)"/><rect x="1252" y="1080" width="4" height="4" fill="rgb(191,191,191)"/><rect x="1252" y="1084" width="4" height="4" fill="rgb(223,223,223)"/><rect x="1256" y="1072" width="4" height="4" fill="rgb(232,232,232)"/><rect x="1256" y="1076" width="4" height="4" fill="rgb(166,166,166)"/><rect x="1256" y="1080" width="4" height="4" fill="rgb(115,115,115)"/><rect x="1256" y="1084" width="4" height="4" fill="rgb(159,159,159)"/><rect x="1256" y="1088" width="4" height="4" fill="rgb(235,235,235)"/><rect x="1260" y="1068" width="4" height="4" fill="rgb(234,234,234)"/><rect x="1260" y="1072" width="4" height="4" fill="rgb(184,184,184)"/><rect x="1260" y="1076" width="4" height="4" fill="rgb(234,234,234)"/><rect x="1260" y="1080" width="4" height="4" fill="rgb(149,149,149)"/><rect x="1260" y="1084" width="4" height="4" fill="rgb(152,152,152)"/><rect x="1260" y="1088" width="4" height="4" fill="rgb(225,225,225)"/><rect x="1264" y="1068" width="4" height="4" fill="rgb(232,232,232)"/><rect x="1264" y="1072" width="4" height="4" fill="rgb(210,210,210)"/><rect x="1264" y="1076" width="4" height="4" fill="rgb(222,222,222)"/><rect x="1264" y="1080" width="4" height="4" fill="rgb(131,131,131)"/><rect x="1264" y="1084" width="4" height="4" fill="rgb(212,212,212)"/><rect x="1264" y="1088" width="4" height="4" fill="rgb(224,224,224)"/><rect x="1268" y="1068" width="4" height="4" fill="rgb(226,226,226)"/><rect x="1268" y="1072" width="4" height="4" fill="rgb(216,216,216)"/><rect x="1268" y="1076" width="4" height="4" fill="rgb(194,194,194)"/><rect x="1268" y="1080" width="4" height="4" fill="rgb(108,108,108)"/><rect x="1268" y="1084" width="4" height="4" fill="rgb(171,171,171)"/><rect x="1272" y="1072" width="4" height="4" fill="rgb(236,236,236)"/><rect x="1272" y="1076" width="4" height="4" fill="rgb(130,130,130)"/><rect x="1272" y="1080" width="4" height="4" fill="rgb(128,128,128)"/><rect x="1272" y="1084" width="4" height="4" fill="rgb(231,231,231)"/><rect x="1272" y="1088" width="4" height="4" fill="rgb(223,223,223)"/><rect x="1276" y="1068" width="4" height="4" fill="rgb(225,225,225)"/><rect x="1276" y="1072" width="4" height="4" fill="rgb(195,195,195)"/><rect x="1276" y="1076" width="4" height="4" fill="rgb(200,200,200)"/><rect x="1276" y="1080" width="4" height="4" fill="rgb(165,165,165)"/><rect x="1276" y="1084" width="4" height="4" fill="rgb(233,233,233)"/><rect x="1280" y="1068" width="4" height="4" fill="rgb(226,226,226)"/><rect x="1280" y="1072" width="4" height="4" fill="rgb(196,196,196)"/><rect x="1280" y="1076" width="4" height="4" fill="rgb(178,178,178)"/><rect x="1280" y="1080" width="4" height="4" fill="rgb(110,110,110)"/><rect x="1280" y="1084" width="4" height="4" fill="rgb(201,201,201)"/><rect x="1280" y="1088" width="4" height="4" fill="rgb(222,222,222)"/><rect x="1284" y="1068" width="4" height="4" fill="rgb(230,230,230)"/><rect x="1284" y="1072" width="4" height="4" fill="rgb(231,231,231)"/><rect x="1284" y="1076" width="4" height="4" fill="rgb(213,213,213)"/><rect x="1284" y="1080" width="4" height="4" fill="rgb(201,201,201)"/><rect x="1284" y="1084" width="4" height="4" fill="rgb(221,221,221)"/><rect x="1284" y="1088" width="4" height="4" fill="rgb(232,232,232)"/><rect x="1288" y="1072" width="4" height="4" fill="rgb(214,214,214)"/><rect x="1288" y="1076" width="4" height="4" fill="rgb(228,228,228)"/><rect x="1288" y="1080" width="4" height="4" fill="rgb(114,114,114)"/><rect x="1288" y="1084" width="4" height="4" fill="rgb(210,210,210)"/><rect x="1288" y="1088" width="4" height="4" fill="rgb(236,236,236)"/><rect x="1292" y="1068" width="4" height="4" fill="rgb(236,236,236)"/><rect x="1292" y="1072" width="4" height="4" fill="rgb(175,175,175)"/><rect x="1292" y="1076" width="4" height="4" fill="rgb(191,191,191)"/><rect x="1292" y="1080" width="4" height="4" fill="rgb(113,113,113)"/><rect x="1292" y="1084" width="4" height="4" fill="rgb(194,194,194)"/><rect x="1292" y="1088" width="4" height="4" fill="rgb(233,233,233)"/><rect x="1296" y="1068" width="4" height="4" fill="rgb(238,238,238)"/><rect x="1296" y="1076" width="4" height="4" fill="rgb(189,189,189)"/><rect x="1296" y="1080" width="4" height="4" fill="rgb(217,217,217)"/><rect x="1296" y="1088" width="4" height="4" fill="rgb(224,224,224)"/><rect x="1300" y="1072" width="4" height="4" fill="rgb(210,210,210)"/><rect x="1300" y="1076" width="4" height="4" fill="rgb(153,153,153)"/><rect x="1300" y="1080" width="4" height="4" fill="rgb(164,164,164)"/><rect x="1300" y="1084" width="4" height="4" fill="rgb(213,213,213)"/><rect x="1300" y="1088" width="4" height="4" fill="rgb(234,234,234)"/><rect x="1304" y="1068" width="4" height="4" fill="rgb(237,237,237)"/><rect x="1304" y="1072" width="4" height="4" fill="rgb(185,185,185)"/><rect x="1304" y="1076" width="4" height="4" fill="rgb(231,231,231)"/><rect x="1304" y="1080" width="4" height="4" fill="rgb(163,163,163)"/><rect x="1304" y="1084" width="4" height="4" fill="rgb(221,221,221)"/></svg>
<div class="a" style="left:1127.5px;top:1074px;width:2.2px;height:16px;background:#111"></div>
<div class="t" style="left:255px;top:1096.91px;font-size:23.5px;line-height:23.5px;color:#000;font-weight:normal;letter-spacing:0px;">appium:app</div>
<div class="t" style="left:691px;top:1096.91px;font-size:23.5px;line-height:23.5px;color:#000;font-weight:normal;letter-spacing:0px;">String</div>
<div class="t" style="left:1126.5px;top:1096.91px;font-size:23.5px;line-height:23.5px;color:#000;font-weight:normal;letter-spacing:0px;">sample.apk</div>
<div class="t" style="left:255px;top:1126.91px;font-size:23.5px;line-height:23.5px;color:#222;font-weight:normal;letter-spacing:0px;">appium:Package</div>
<div class="t" style="left:691px;top:1126.91px;font-size:23.5px;line-height:23.5px;color:#222;font-weight:normal;letter-spacing:0px;">String</div>
<div class="t" style="left:1126.5px;top:1126.91px;font-size:23.5px;line-height:23.5px;color:#222;font-weight:normal;letter-spacing:0px;">com.app.sample</div>
<div class="a" style="left:734px;top:1460px;width:180px;height:32px;border-radius:7px;background:#fff;box-shadow:0 0.5px 1.5px rgba(0,0,0,0.38),0 0 0 0.5px rgba(0,0,0,0.06)"></div>
<div class="t" style="left:734.0px;width:180px;text-align:center;top:1465.61px;font-size:23.5px;line-height:23.5px;color:#1e1e1e;font-weight:normal;letter-spacing:0px">Import</div>
<div class="a" style="left:952px;top:1460px;width:180px;height:32px;border-radius:7px;background:#fff;box-shadow:0 0.5px 1.5px rgba(0,0,0,0.38),0 0 0 0.5px rgba(0,0,0,0.06)"></div>
<div class="t" style="left:952.0px;width:180px;text-align:center;top:1465.61px;font-size:23.5px;line-height:23.5px;color:#1e1e1e;font-weight:normal;letter-spacing:0px">Export</div>
<div class="a" style="left:1170px;top:1460px;width:180px;height:32px;border-radius:7px;background:#fff;box-shadow:0 0.5px 1.5px rgba(0,0,0,0.38),0 0 0 0.5px rgba(0,0,0,0.06)"></div>
<div class="t" style="left:1170.0px;width:180px;text-align:center;top:1465.61px;font-size:23.5px;line-height:23.5px;color:#1e1e1e;font-weight:normal;letter-spacing:0px">Cancel</div>
<div class="a" style="left:1388px;top:1460px;width:180px;height:32px;border-radius:7px;background:linear-gradient(#2d8dff,#0a6cff);box-shadow:0 0.5px 1.5px rgba(0,80,200,0.35)"></div>
<div class="t" style="left:1388.0px;width:180px;text-align:center;top:1465.61px;font-size:23.5px;line-height:23.5px;color:#fff;font-weight:normal;letter-spacing:0px">OK</div>
</div></div>
</body></html>
